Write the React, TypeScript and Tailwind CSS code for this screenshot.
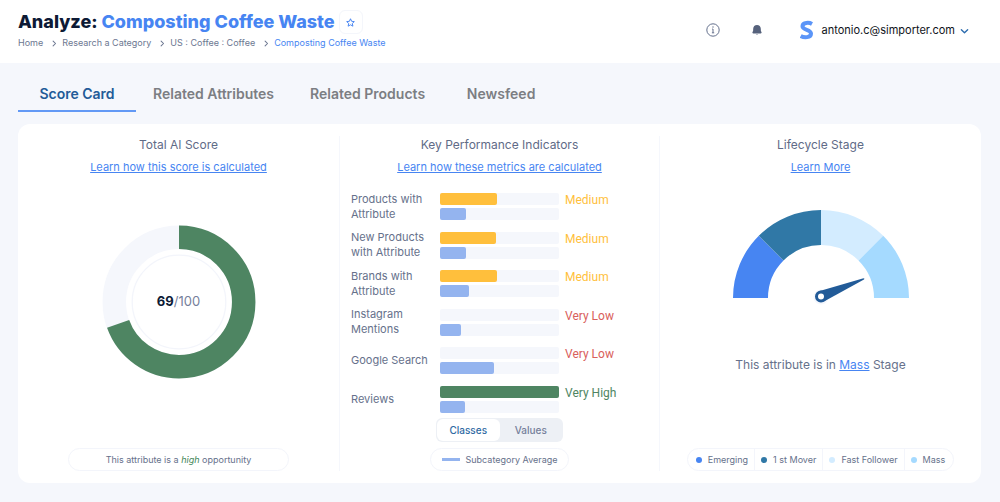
import React from "react";

const crumbs = ["Home", "Research a Category", "US : Coffee : Coffee"];

const tabs = ["Related Attributes", "Related Products", "Newsfeed"];

type Kpi = {
  lines: string[];
  value: number;
  average: number;
  rating: string;
  bar: string;
  text: string;
};

const kpis: Kpi[] = [
  { lines: ["Products with", "Attribute"], value: 48, average: 22, rating: "Medium", bar: "bg-[#ffbf3c]", text: "text-[#ffbf3c]" },
  { lines: ["New Products", "with Attribute"], value: 47, average: 22, rating: "Medium", bar: "bg-[#ffbf3c]", text: "text-[#ffbf3c]" },
  { lines: ["Brands with", "Attribute"], value: 48, average: 24, rating: "Medium", bar: "bg-[#ffbf3c]", text: "text-[#ffbf3c]" },
  { lines: ["Instagram", "Mentions"], value: 0, average: 18, rating: "Very Low", bar: "bg-[#d9605c]", text: "text-[#d9605c]" },
  { lines: ["Google Search"], value: 0, average: 45, rating: "Very Low", bar: "bg-[#d9605c]", text: "text-[#d9605c]" },
  { lines: ["Reviews"], value: 100, average: 21, rating: "Very High", bar: "bg-[#4e8562]", text: "text-[#4e8562]" },
];

const stages = [
  { name: "Emerging", dot: "bg-[#4785f2]" },
  { name: "1 st Mover", dot: "bg-[#3078a6]" },
  { name: "Fast Follower", dot: "bg-[#d3ecff]" },
  { name: "Mass", dot: "bg-[#a5daff]" },
];

function Chevron({ className, d = "M3 1.5 6.5 5 3 8.5" }: { className: string; d?: string }) {
  return (
    <svg viewBox="0 0 10 10" className={className} fill="none" stroke="currentColor" strokeWidth="1.5" strokeLinecap="round" strokeLinejoin="round" aria-hidden="true">
      <path d={d} />
    </svg>
  );
}

function Header() {
  return (
    <header className="flex h-[63px] items-start justify-between bg-white pl-[18px] pr-[31px]">
      <div className="pt-[10px]">
        <div className="flex h-6 items-center gap-1">
          <h1 className="whitespace-nowrap text-[18px] font-extrabold leading-6 text-[#0d1a35]">
            Analyze: <span className="text-[#4785f2]">Composting Coffee Waste</span>
          </h1>
          <button type="button" aria-label="Add to favorites" className="flex size-6 items-center justify-center rounded-md border border-[#f4f6fb] text-[#4785f2]">
            <svg viewBox="0 0 24 24" className="size-[9px]" fill="none" stroke="currentColor" strokeWidth="2.6" strokeLinejoin="round">
              <path d="m12 2 3 6.8 7.2.8-5.4 4.900 1.600 7.300L12 18.200l-6.400 3.600 1.600-7.300L1.800 9.600 9 8.800z" />
            </svg>
          </button>
        </div>
        <nav aria-label="Breadcrumb" className="flex h-[18px] items-center text-[9px] text-[#6c7791]">
          {crumbs.map((crumb) => (
            <React.Fragment key={crumb}>
              <a href="#" className="whitespace-nowrap">{crumb}</a>
              <Chevron className="ml-2 mr-1 size-[7px]" />
            </React.Fragment>
          ))}
          <a href="#" aria-current="page" className="whitespace-nowrap text-[#4785f2]">Composting Coffee Waste</a>
        </nav>
      </div>
      <div className="flex h-[60px] items-center">
        <button type="button" aria-label="Information" className="mr-8 text-[#64708c]">
          <svg viewBox="0 0 14 14" className="size-[14px]" fill="none" stroke="currentColor" strokeWidth="1">
            <circle cx="7" cy="7" r="6.200" />
            <path d="M6.200 6H7v3.700M5.900 9.800h2.300" />
            <circle cx="7" cy="4" r=".7" fill="currentColor" stroke="none" />
          </svg>
        </button>
        <button type="button" aria-label="Notifications" className="mr-[38px] text-[#56627c]">
          <svg viewBox="0 0 10 12" className="h-3 w-[10px]" fill="currentColor">
            <path d="M5 1C2.700 1 1.300 2.500 1.200 4.700L1.100 7 .5 8.100C.2 8.900.6 9.400 1.300 9.400h7.400c.7 0 1.100-.5.800-1.300L8.900 7l-.1-2.300C8.700 2.500 7.300 1 5 1z" />
            <path d="M3.800 10.100h2.400c-.2.7-.6 1-1.200 1s-1-.3-1.200-1z" opacity=".45" />
          </svg>
        </button>
        <button type="button" className="flex items-center text-[11px] text-[#10131a]">
          <svg viewBox="0 0 14 20" className="mr-2 h-5 w-[14px]" fill="none" aria-hidden="true">
            <path d="M12 3.900C9.500 2.500 2.700 2 2.500 6.200c-.1 4.300 8.600 2.900 8.500 7.400-.1 4.300-6.800 4.300-10.300 2.400" stroke="#5b95f8" strokeWidth="4" />
          </svg>
          <span>antonio.c@simporter.com</span>
          <Chevron className="ml-[5px] mt-[3px] size-[9px] text-[#2c6cae]" d="M1.500 3 5 6.500 8.500 3" />
        </button>
      </div>
    </header>
  );
}

function Tabs() {
  return (
    <nav aria-label="Sections" className="flex h-[49px] items-stretch px-[18px] pt-[14px] text-[14px] font-semibold text-[#7c7e83]">
      <a href="#" aria-current="page" className="mr-[17px] flex w-[118px] items-center justify-center border-b-2 border-[#6299f5] text-[#225b98]">
        Score Card
      </a>
      <div className="flex items-center gap-9 border-b-2 border-transparent">
        {tabs.map((tab) => (
          <a key={tab} href="#" className="min-w-20 whitespace-nowrap text-center">{tab}</a>
        ))}
      </div>
    </nav>
  );
}

function Panel({ title, link, children }: { title: string; link: string; children: React.ReactNode }) {
  return (
    <section className="flex flex-col items-center">
      <h2 className="text-[12px] leading-[18px] text-[#5f6b87]">{title}</h2>
      <a href="#" className="mt-1 text-[11px] leading-[18px] text-[#4785f2] underline">{link}</a>
      {children}
    </section>
  );
}

function ScoreDonut() {
  return (
    <div className="mt-[49px] grid place-items-center">
      <svg viewBox="0 0 154 154" className="col-start-1 row-start-1 size-[154px]" fill="none" aria-hidden="true">
        <circle cx="77" cy="77" r="64.700" stroke="#f5f7fc" strokeWidth="23.500" />
        <circle cx="77" cy="77" r="64.700" stroke="#4e8562" strokeWidth="23.500" pathLength="100" strokeDasharray="69.500 100" transform="rotate(-90 77 77)" />
        <circle cx="77" cy="77" r="46.800" stroke="#f3f5fb" strokeWidth="1.300" />
      </svg>
      <p className="col-start-1 row-start-1 text-[13px] text-[#75809b]">
        <strong className="font-bold text-[#0d1a35]">69</strong>/100
      </p>
    </div>
  );
}

function Track({ value, color }: { value: number; color: string }) {
  return (
    <div className="h-3 rounded-xs bg-[#f5f7fc]">
      <div className={`h-full rounded-xs ${color}`} style={{ width: `${value}%` }} />
    </div>
  );
}

function KpiList() {
  return (
    <div className="mt-[17px] flex h-[220px] w-full flex-col justify-between pl-[11px] pr-[39px]">
      {kpis.map((kpi) => (
        <div key={kpi.lines.join(" ")} className="flex h-[27px] items-center">
          <div className="w-[89px] whitespace-nowrap text-[11px] leading-[15px] text-[#66718b]">
            {kpi.lines.map((line) => (
              <div key={line}>{line}</div>
            ))}
          </div>
          <div className="flex flex-1 flex-col gap-[3px]">
            <Track value={kpi.value} color={kpi.bar} />
            <Track value={kpi.average} color="bg-[#94b4ef]" />
          </div>
          <div className={`ml-[6px] w-[55px] self-start whitespace-nowrap font-['Roboto',sans-serif] text-[12px] leading-[14px] ${kpi.text}`}>
            {kpi.rating}
          </div>
        </div>
      ))}
    </div>
  );
}

function Gauge() {
  return (
    <svg viewBox="0 0 178 96" className="mt-[33px] h-24 w-[178px]" aria-label="Lifecycle gauge" role="img">
      <path d="M1 89A88 88 0 0 1 26.800 26.800L51.500 51.500A53 53 0 0 0 36 89z" fill="#4785f2" />
      <path d="M26.800 26.800A88 88 0 0 1 89 1V36A53 53 0 0 0 51.500 51.500z" fill="#3078a6" />
      <path d="M89 1A88 88 0 0 1 151.200 26.800L126.500 51.500A53 53 0 0 0 89 36z" fill="#d3ecff" />
      <path d="M151.200 26.800A88 88 0 0 1 177 89H142A53 53 0 0 0 126.500 51.500z" fill="#a5daff" />
      <circle cx="89" cy="88" r="7.500" fill="#f5f7fc" />
      <path d="M86.800 82.200 131.500 69.200Q133.200 69.300 132 70.600L91.500 92.800z" fill="#225b98" />
      <circle cx="89" cy="87.500" r="4.500" fill="#fff" stroke="#225b98" strokeWidth="3" />
    </svg>
  );
}

export default function App() {
  return (
    <div className="min-h-screen bg-[#f5f7fc] pb-[19px] font-['Inter','Liberation_Sans',sans-serif]">
      <Header />
      <Tabs />
      <main className="ml-[18px] mr-[19px] mt-3 grid grid-cols-[321fr_1px_319fr_1px_321fr] rounded-xl bg-white py-3">
        <Panel title="Total AI Score" link="Learn how this score is calculated">
          <ScoreDonut />
          <p className="mt-auto flex h-[23px] w-[221px] items-center justify-center rounded-full border border-[#f3f5fb] text-[9px] text-[#66718b]">
            <span>This attribute is a <em className="text-[#3f8557]">high</em> opportunity</span>
          </p>
        </Panel>
        <div className="bg-[#f5f7fc]" />
        <Panel title="Key Performance Indicators" link="Learn how these metrics are calculated">
          <KpiList />
          <div className="mt-[5px] flex h-6 w-[127px] rounded-md bg-[#edf0f5] p-px text-[10px] font-medium">
            <button type="button" aria-pressed="true" className="flex-1 rounded-md bg-white text-[#2f6aa3]">Classes</button>
            <button type="button" aria-pressed="false" className="flex-1 text-[#75809b]">Values</button>
          </div>
          <p className="mt-[6px] flex h-[23px] items-center gap-[6px] rounded-full border border-[#f3f5fb] px-[11px] text-[9px] text-[#66718b]">
            <span className="h-[3px] w-[18px] bg-[#94b4ef]" />
            Subcategory Average
          </p>
        </Panel>
        <div className="bg-[#f5f7fc]" />
        <Panel title="Lifecycle Stage" link="Learn More">
          <Gauge />
          <p className="mt-[51px] text-[12px] leading-[18px] text-[#66718b]">
            This attribute is in <a href="#" className="text-[#4785f2] underline">Mass</a> Stage
          </p>
          <ul className="mt-auto flex h-[23px] rounded-full border border-[#f3f5fb] text-[9px] text-[#66718b]">
            {stages.map((stage) => (
              <li key={stage.name} className="flex items-center gap-[6px] whitespace-nowrap border-r border-[#f3f5fb] px-[6px] first:pl-2 last:border-r-0 last:pr-2">
                <span className={`size-[6px] rounded-full ${stage.dot}`} />
                {stage.name}
              </li>
            ))}
          </ul>
        </Panel>
      </main>
    </div>
  );
}
